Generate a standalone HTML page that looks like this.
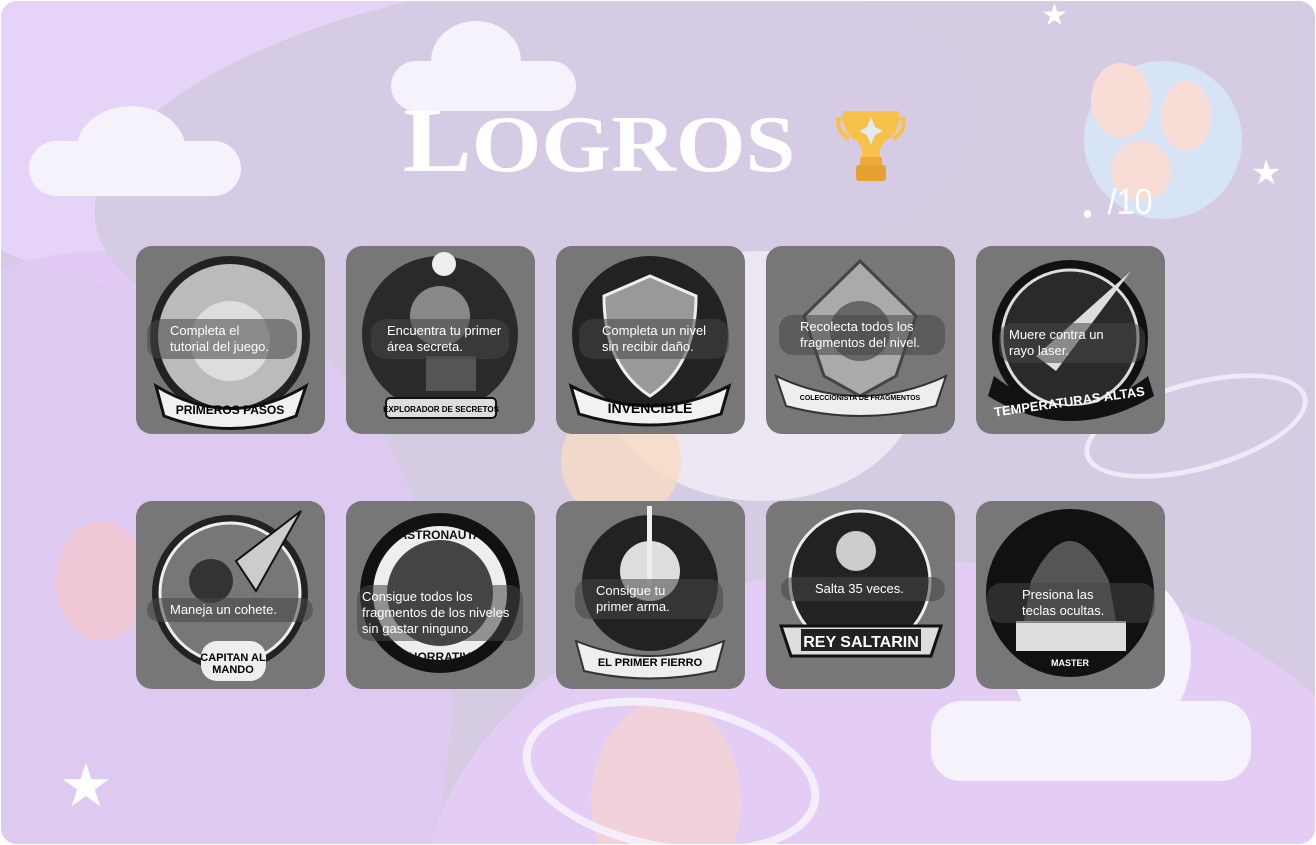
<!DOCTYPE html>
<html><head><meta charset="utf-8"><style>
*{margin:0;padding:0;box-sizing:border-box}
html,body{width:1316px;height:845px;overflow:hidden}
body{background:#fff;font-family:"Liberation Sans",sans-serif}
#f{position:absolute;left:1px;top:1px;width:1314px;height:843px;border-radius:16px;overflow:hidden;background:#d5cbe3}
.b{position:absolute;border-radius:50%}
.card{position:absolute;width:189px;height:188px;background:#777;border-radius:16px;overflow:hidden}
.card svg{position:absolute;left:0;top:0}
.pill{position:absolute;background:rgba(70,70,70,.55);border-radius:14px;color:#fff;font-size:13px;line-height:16px;padding:4px 0 4px 0}
.star{position:absolute;color:#fff;font-size:34px;line-height:1}
</style></head><body><div id="f">
<div class="b" style="left:-200px;top:-300px;width:900px;height:600px;background:#e6d3f8"></div>
<div class="b" style="left:-250px;top:250px;width:700px;height:900px;background:#e0c9f4;opacity:.8"></div>
<div class="b" style="left:420px;top:560px;width:1000px;height:700px;background:#e3cdf5"></div>
<div class="b" style="left:90px;top:-20px;width:880px;height:360px;background:#d6cbe5;transform:rotate(-8deg)"></div>
<div class="b" style="left:1083px;top:60px;width:158px;height:158px;background:#d6e4f6"></div>
<div class="b" style="left:1090px;top:62px;width:60px;height:75px;background:#f8dcd6"></div>
<div class="b" style="left:1160px;top:80px;width:50px;height:70px;background:#f8dcd6"></div>
<div class="b" style="left:1110px;top:140px;width:60px;height:60px;background:#f8dcd6"></div>
<div class="b" style="left:55px;top:520px;width:90px;height:120px;background:#f0c7d6"></div>
<div class="b" style="left:590px;top:700px;width:150px;height:200px;background:#f2d2da"></div>
<div class="b" style="left:520px;top:700px;width:300px;height:150px;border:8px solid #f4eefa;background:transparent;transform:rotate(10deg)"></div>
<div class="b" style="left:1080px;top:380px;width:230px;height:90px;border:5px solid #f0eaf8;transform:rotate(-15deg)"></div>
<div style="position:absolute;left:28px;top:140px;width:212px;height:55px;background:#f6f2fb;border-radius:28px"></div>
<div class="b" style="left:75px;top:105px;width:110px;height:90px;background:#f6f2fb"></div>
<div style="position:absolute;left:390px;top:60px;width:185px;height:50px;background:#f6f2fb;border-radius:25px"></div>
<div class="b" style="left:430px;top:20px;width:90px;height:80px;background:#f6f2fb"></div>
<div style="position:absolute;left:930px;top:700px;width:320px;height:80px;background:#f6f2fb;border-radius:30px"></div>
<div class="b" style="left:1010px;top:560px;width:180px;height:190px;background:#f6f2fb"></div>
<div class="b" style="left:600px;top:250px;width:320px;height:250px;background:#f3eef8;opacity:.8"></div>
<div class="b" style="left:560px;top:400px;width:120px;height:120px;background:#f6dcc0;opacity:.8"></div>
<div class="star" style="left:1040px;top:0px;font-size:30px">★</div>
<div class="star" style="left:1250px;top:155px">★</div>
<div class="star" style="left:58px;top:755px;font-size:60px">★</div>

<div style="position:absolute;left:402px;top:94px;color:#fff;font-family:'Liberation Serif',serif;font-weight:bold;font-size:92px;line-height:90px;white-space:nowrap;transform:scaleX(1.12);transform-origin:left">L<span style="font-size:80px">OGROS</span></div>
<svg style="position:absolute;left:835px;top:106px" width="70" height="74" viewBox="0 0 70 74"><path d="M7 4h56v6c0 12-6 20-14 24l-5 8v12h-18v-12l-5-8c-8-4-14-12-14-24z" fill="#f8c24a"/><path d="M0 10h10v4h-6c0 8 4 12 10 16l-2 4c-8-4-12-12-12-20zM70 10h-10v4h6c0 8-4 12-10 16l2 4c8-4 12-12 12-20z" fill="#f8c24a"/><path d="M35 10l4 10 8 4-8 4-4 10-4-10-8-4 8-4z" fill="#e2ebf2"/><rect x="24" y="50" width="22" height="10" rx="2" fill="#efa83a"/><rect x="20" y="58" width="30" height="16" rx="3" fill="#e3a232"/></svg>
<div class="b" style="left:1083px;top:209px;width:7px;height:8px;background:#fff"></div>
<div style="position:absolute;left:1104px;top:180px;color:#fff;font-family:'Liberation Sans',sans-serif;font-size:36px;transform:scaleX(.9)">/10</div>

<div class="card" style="left:135px;top:245px"><svg width="189" height="188"><circle cx="94" cy="90" r="80" fill="#222"/><circle cx="94" cy="90" r="72" fill="#bbb"/><circle cx="94" cy="95" r="40" fill="#ddd"/><path d="M20 140 Q94 185 170 140 L160 170 Q94 195 28 170z" fill="#f0f0f0" stroke="#111" stroke-width="3"/><text x="94" y="168" font-size="12" font-weight="bold" text-anchor="middle" font-family="Liberation Sans">PRIMEROS PASOS</text></svg><div class="pill" style="left:11px;top:73px;width:150px;padding-left:23px">Completa el<br>tutorial del juego.</div></div>
<div class="card" style="left:345px;top:245px"><svg width="189" height="188"><circle cx="94" cy="88" r="78" fill="#2a2a2a"/><circle cx="94" cy="70" r="30" fill="#888"/><circle cx="98" cy="18" r="12" fill="#eee"/><rect x="80" y="110" width="50" height="35" fill="#555"/><rect x="40" y="152" width="110" height="20" rx="4" fill="#ddd" stroke="#111" stroke-width="2"/><text x="95" y="166" font-size="8" font-weight="bold" text-anchor="middle" font-family="Liberation Sans">EXPLORADOR DE SECRETOS</text></svg><div class="pill" style="left:25px;top:73px;width:138px;padding-left:16px">Encuentra tu primer<br>área secreta.</div></div>
<div class="card" style="left:555px;top:245px"><svg width="189" height="188"><circle cx="94" cy="88" r="78" fill="#222"/><path d="M94 30 L140 50 Q140 120 94 150 Q48 120 48 50z" fill="#999" stroke="#eee" stroke-width="3"/><path d="M15 140 Q94 180 173 140 L165 168 Q94 190 23 168z" fill="#f2f2f2" stroke="#111" stroke-width="3"/><text x="94" y="167" font-size="14" font-weight="bold" text-anchor="middle" font-family="Liberation Sans">INVENCIBLE</text></svg><div class="pill" style="left:23px;top:73px;width:150px;padding-left:23px">Completa un nivel<br>sin recibir daño.</div></div>
<div class="card" style="left:765px;top:245px"><svg width="189" height="188"><path d="M94 15 L150 70 L130 130 L94 150 L58 130 L38 70z" fill="#aaa" stroke="#444" stroke-width="3"/><circle cx="94" cy="85" r="30" fill="#666"/><path d="M10 130 Q94 170 180 130 L170 160 Q94 180 20 160z" fill="#eee" stroke="#333" stroke-width="2"/><text x="94" y="154" font-size="7" font-weight="bold" text-anchor="middle" font-family="Liberation Sans">COLECCIONISTA DE FRAGMENTOS</text></svg><div class="pill" style="left:13px;top:69px;width:166px;padding-left:21px">Recolecta todos los<br>fragmentos del nivel.</div></div>
<div class="card" style="left:975px;top:245px"><svg width="189" height="188"><circle cx="94" cy="92" r="78" fill="#111"/><circle cx="94" cy="92" r="68" fill="#2a2a2a" stroke="#ddd" stroke-width="3"/><path d="M155 25 L60 110 L80 125z" fill="#ddd"/><path d="M18 130 Q94 190 172 130 L178 150 Q94 200 12 150z" fill="#111"/><text x="94" y="160" font-size="13" font-weight="bold" fill="#fff" text-anchor="middle" font-family="Liberation Sans" transform="rotate(-8 94 160)">TEMPERATURAS ALTAS</text></svg><div class="pill" style="left:23px;top:77px;width:146px;padding-left:10px">Muere contra un<br>rayo laser.</div></div>

<div class="card" style="left:135px;top:500px"><svg width="189" height="188"><circle cx="94" cy="92" r="78" fill="#222"/><circle cx="94" cy="92" r="70" fill="#777" stroke="#eee" stroke-width="3"/><path d="M165 10 L100 60 L120 90z" fill="#ccc" stroke="#111" stroke-width="2"/><circle cx="75" cy="80" r="22" fill="#333"/><rect x="65" y="140" width="65" height="40" rx="16" fill="#eee"/><text x="97" y="160" font-size="11" font-weight="bold" text-anchor="middle" font-family="Liberation Sans">CAPITAN AL</text><text x="97" y="172" font-size="11" font-weight="bold" text-anchor="middle" font-family="Liberation Sans">MANDO</text></svg><div class="pill" style="left:11px;top:97px;width:166px;padding-left:23px">Maneja un cohete.</div></div>
<div class="card" style="left:345px;top:500px"><svg width="189" height="188"><circle cx="94" cy="92" r="80" fill="#111"/><circle cx="94" cy="92" r="60" fill="#444" stroke="#eee" stroke-width="14"/><text x="94" y="38" font-size="12" font-weight="bold" fill="#111" text-anchor="middle" font-family="Liberation Sans">ASTRONAUTA</text><text x="94" y="160" font-size="12" font-weight="bold" fill="#111" text-anchor="middle" font-family="Liberation Sans">AHORRATIVO</text></svg><div class="pill" style="left:11px;top:84px;width:166px;padding-left:5px">Consigue todos los<br>fragmentos de los niveles<br>sin gastar ninguno.</div></div>
<div class="card" style="left:555px;top:500px"><svg width="189" height="188"><circle cx="94" cy="82" r="68" fill="#222"/><circle cx="94" cy="70" r="30" fill="#ddd"/><rect x="91" y="5" width="5" height="80" fill="#eee"/><path d="M20 140 Q94 170 168 140 L160 170 Q94 185 28 170z" fill="#eee" stroke="#333" stroke-width="2"/><text x="94" y="165" font-size="11" font-weight="bold" text-anchor="middle" font-family="Liberation Sans">EL PRIMER FIERRO</text></svg><div class="pill" style="left:19px;top:78px;width:148px;padding-left:21px">Consigue tu<br>primer arma.</div></div>
<div class="card" style="left:765px;top:500px"><svg width="189" height="188"><circle cx="94" cy="80" r="70" fill="#222" stroke="#eee" stroke-width="3"/><circle cx="90" cy="50" r="20" fill="#ccc"/><path d="M15 125 H175 L165 155 H25z" fill="#ddd" stroke="#111" stroke-width="3"/><rect x="35" y="128" width="120" height="22" fill="#222"/><text x="95" y="146" font-size="16" font-weight="bold" fill="#fff" text-anchor="middle" font-family="Liberation Sans">REY SALTARIN</text></svg><div class="pill" style="left:15px;top:76px;width:164px;padding-left:34px">Salta 35 veces.</div></div>
<div class="card" style="left:975px;top:500px"><svg width="189" height="188"><circle cx="94" cy="92" r="84" fill="#111"/><path d="M55 80 Q94 0 133 80 L140 120 H48z" fill="#555"/><rect x="40" y="120" width="110" height="30" fill="#ddd"/><text x="94" y="165" font-size="9" font-weight="bold" fill="#fff" text-anchor="middle" font-family="Liberation Sans">MASTER</text></svg><div class="pill" style="left:11px;top:82px;width:168px;padding-left:35px">Presiona las<br>teclas ocultas.</div></div>
</div></body></html>
